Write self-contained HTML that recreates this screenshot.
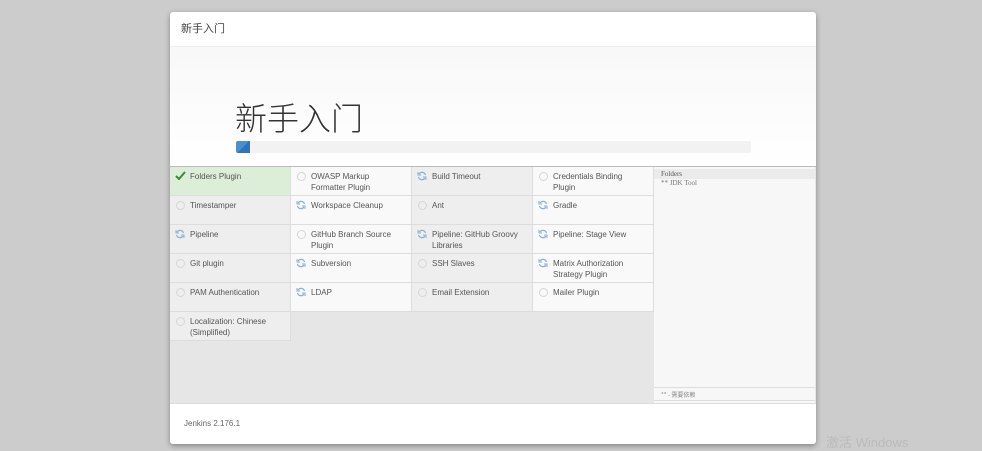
<!DOCTYPE html>
<html><head><meta charset="utf-8"><style>
body{margin:0;width:982px;height:448px;background:#cccccc;font-family:"Liberation Sans","Noto Sans CJK SC",sans-serif;position:relative;overflow:hidden}
.modal{position:absolute;left:170px;top:12px;width:646px;height:432px;background:#fff;border-radius:3px;box-shadow:0 2px 6px rgba(0,0,0,.35);overflow:hidden}
.hdr{position:absolute;left:0;top:0;width:646px;height:35px;border-bottom:1px solid #eee;font-size:11px;color:#444;line-height:35px;padding-left:11px;box-sizing:border-box}
.hero{position:absolute;left:0;top:35px;width:646px;height:119px;background:linear-gradient(#f8f8f8,#fff)}
.hero h1{position:absolute;left:65px;top:50px;margin:0;font-weight:300;font-size:32px;color:#333;font-family:"Noto Sans CJK SC",sans-serif;line-height:40px}
.bar{position:absolute;left:66px;top:94px;width:515px;height:12px;background:#f2f2f2;border-radius:2px;overflow:hidden}
.bar div{width:14px;height:12px;background:linear-gradient(135deg,#4a8fd0 50%,#2f73b8 50%)}
.grid{position:absolute;left:0;top:154px;width:646px;height:237px;background:#e6e6e6;border-top:1px solid #bbb;box-sizing:border-box}
.c{position:absolute;width:121px;height:29px;box-sizing:border-box;border-right:1px solid #ddd;border-bottom:1px solid #ddd;font-size:8px;color:#555;padding:4px 4px 0 20px;line-height:11px;white-space:nowrap}
.g{background:#eeeeee}.w{background:#f9f9f9}.ok{background:#dcedd8}
.c i{position:absolute;left:6px;top:5px;width:7px;height:7px;border:1px solid #d6d6d6;border-radius:50%}
.c svg{position:absolute;left:5px;top:4px}
.log{position:absolute;left:484px;top:0;width:161px;height:237px;background:#f7f7f7;font-family:"Liberation Serif","Noto Serif CJK SC",serif;font-size:7px;color:#555}
.foot{position:absolute;left:0;top:391px;width:646px;height:41px;border-top:1px solid #ddd;font-size:8px;color:#666;line-height:40px;padding-left:14px;box-sizing:border-box}
.win{position:absolute;left:826px;top:432px;font-size:13px;color:#bbb}
</style></head><body>
<div class="modal">
<div class="hdr">新手入门</div>
<div class="hero"><h1>新手入门</h1><div class="bar"><div></div></div></div>
<div class="grid">
<div class="c ok" style="left:0;top:0"><svg width="11" height="9" viewBox="0 0 11 9"><path d="M1 5l3 3 6-7" stroke="#3a8a3a" stroke-width="2" fill="none"/></svg>Folders Plugin</div>
<div class="c w" style="left:121px;top:0"><i></i>OWASP Markup<br>Formatter Plugin</div>
<div class="c g" style="left:242px;top:0"><svg width="10" height="10" viewBox="0 0 10 10"><path d="M8.5 4A3.6 3.6 0 0 0 2 3M1.5 6A3.6 3.6 0 0 0 8 7" stroke="#8ab0d4" stroke-width="1.2" fill="none"/><path d="M1 1v3h3M9 9V6H6" stroke="#8ab0d4" stroke-width="1" fill="none"/></svg>Build Timeout</div>
<div class="c w" style="left:363px;top:0"><i></i>Credentials Binding<br>Plugin</div>

<div class="c g" style="left:0;top:29px"><i></i>Timestamper</div>
<div class="c w" style="left:121px;top:29px"><svg width="10" height="10" viewBox="0 0 10 10"><path d="M8.5 4A3.6 3.6 0 0 0 2 3M1.5 6A3.6 3.6 0 0 0 8 7" stroke="#8ab0d4" stroke-width="1.2" fill="none"/><path d="M1 1v3h3M9 9V6H6" stroke="#8ab0d4" stroke-width="1" fill="none"/></svg>Workspace Cleanup</div>
<div class="c g" style="left:242px;top:29px"><i></i>Ant</div>
<div class="c w" style="left:363px;top:29px"><svg width="10" height="10" viewBox="0 0 10 10"><path d="M8.5 4A3.6 3.6 0 0 0 2 3M1.5 6A3.6 3.6 0 0 0 8 7" stroke="#8ab0d4" stroke-width="1.2" fill="none"/><path d="M1 1v3h3M9 9V6H6" stroke="#8ab0d4" stroke-width="1" fill="none"/></svg>Gradle</div>

<div class="c g" style="left:0;top:58px"><svg width="10" height="10" viewBox="0 0 10 10"><path d="M8.5 4A3.6 3.6 0 0 0 2 3M1.5 6A3.6 3.6 0 0 0 8 7" stroke="#8ab0d4" stroke-width="1.2" fill="none"/><path d="M1 1v3h3M9 9V6H6" stroke="#8ab0d4" stroke-width="1" fill="none"/></svg>Pipeline</div>
<div class="c w" style="left:121px;top:58px"><i></i>GitHub Branch Source<br>Plugin</div>
<div class="c g" style="left:242px;top:58px"><svg width="10" height="10" viewBox="0 0 10 10"><path d="M8.5 4A3.6 3.6 0 0 0 2 3M1.5 6A3.6 3.6 0 0 0 8 7" stroke="#8ab0d4" stroke-width="1.2" fill="none"/><path d="M1 1v3h3M9 9V6H6" stroke="#8ab0d4" stroke-width="1" fill="none"/></svg>Pipeline: GitHub Groovy<br>Libraries</div>
<div class="c w" style="left:363px;top:58px"><svg width="10" height="10" viewBox="0 0 10 10"><path d="M8.5 4A3.6 3.6 0 0 0 2 3M1.5 6A3.6 3.6 0 0 0 8 7" stroke="#8ab0d4" stroke-width="1.2" fill="none"/><path d="M1 1v3h3M9 9V6H6" stroke="#8ab0d4" stroke-width="1" fill="none"/></svg>Pipeline: Stage View</div>

<div class="c g" style="left:0;top:87px"><i></i>Git plugin</div>
<div class="c w" style="left:121px;top:87px"><svg width="10" height="10" viewBox="0 0 10 10"><path d="M8.5 4A3.6 3.6 0 0 0 2 3M1.5 6A3.6 3.6 0 0 0 8 7" stroke="#8ab0d4" stroke-width="1.2" fill="none"/><path d="M1 1v3h3M9 9V6H6" stroke="#8ab0d4" stroke-width="1" fill="none"/></svg>Subversion</div>
<div class="c g" style="left:242px;top:87px"><i></i>SSH Slaves</div>
<div class="c w" style="left:363px;top:87px"><svg width="10" height="10" viewBox="0 0 10 10"><path d="M8.5 4A3.6 3.6 0 0 0 2 3M1.5 6A3.6 3.6 0 0 0 8 7" stroke="#8ab0d4" stroke-width="1.2" fill="none"/><path d="M1 1v3h3M9 9V6H6" stroke="#8ab0d4" stroke-width="1" fill="none"/></svg>Matrix Authorization<br>Strategy Plugin</div>

<div class="c g" style="left:0;top:116px"><i></i>PAM Authentication</div>
<div class="c w" style="left:121px;top:116px"><svg width="10" height="10" viewBox="0 0 10 10"><path d="M8.5 4A3.6 3.6 0 0 0 2 3M1.5 6A3.6 3.6 0 0 0 8 7" stroke="#8ab0d4" stroke-width="1.2" fill="none"/><path d="M1 1v3h3M9 9V6H6" stroke="#8ab0d4" stroke-width="1" fill="none"/></svg>LDAP</div>
<div class="c g" style="left:242px;top:116px"><i></i>Email Extension</div>
<div class="c w" style="left:363px;top:116px"><i></i>Mailer Plugin</div>

<div class="c g" style="left:0;top:145px"><i></i>Localization: Chinese<br>(Simplified)</div>

<div class="log">
<div style="background:#ebebeb;height:10px;line-height:10px;padding-left:7px;margin-top:2px">Folders</div>
<div style="padding-left:7px;line-height:9px;color:#777">** JDK Tool</div>
<div style="position:absolute;left:0;top:220px;width:161px;border-top:1px solid #ddd;border-bottom:1px solid #ddd;height:14px;line-height:14px;padding-left:7px;box-sizing:border-box;color:#888;font-family:'Noto Sans CJK SC',sans-serif;font-size:6px">** - 需要依赖</div>
</div>
</div>
<div class="foot">Jenkins 2.176.1</div>
</div>
<div class="win">激活 Windows</div>
</body></html>
